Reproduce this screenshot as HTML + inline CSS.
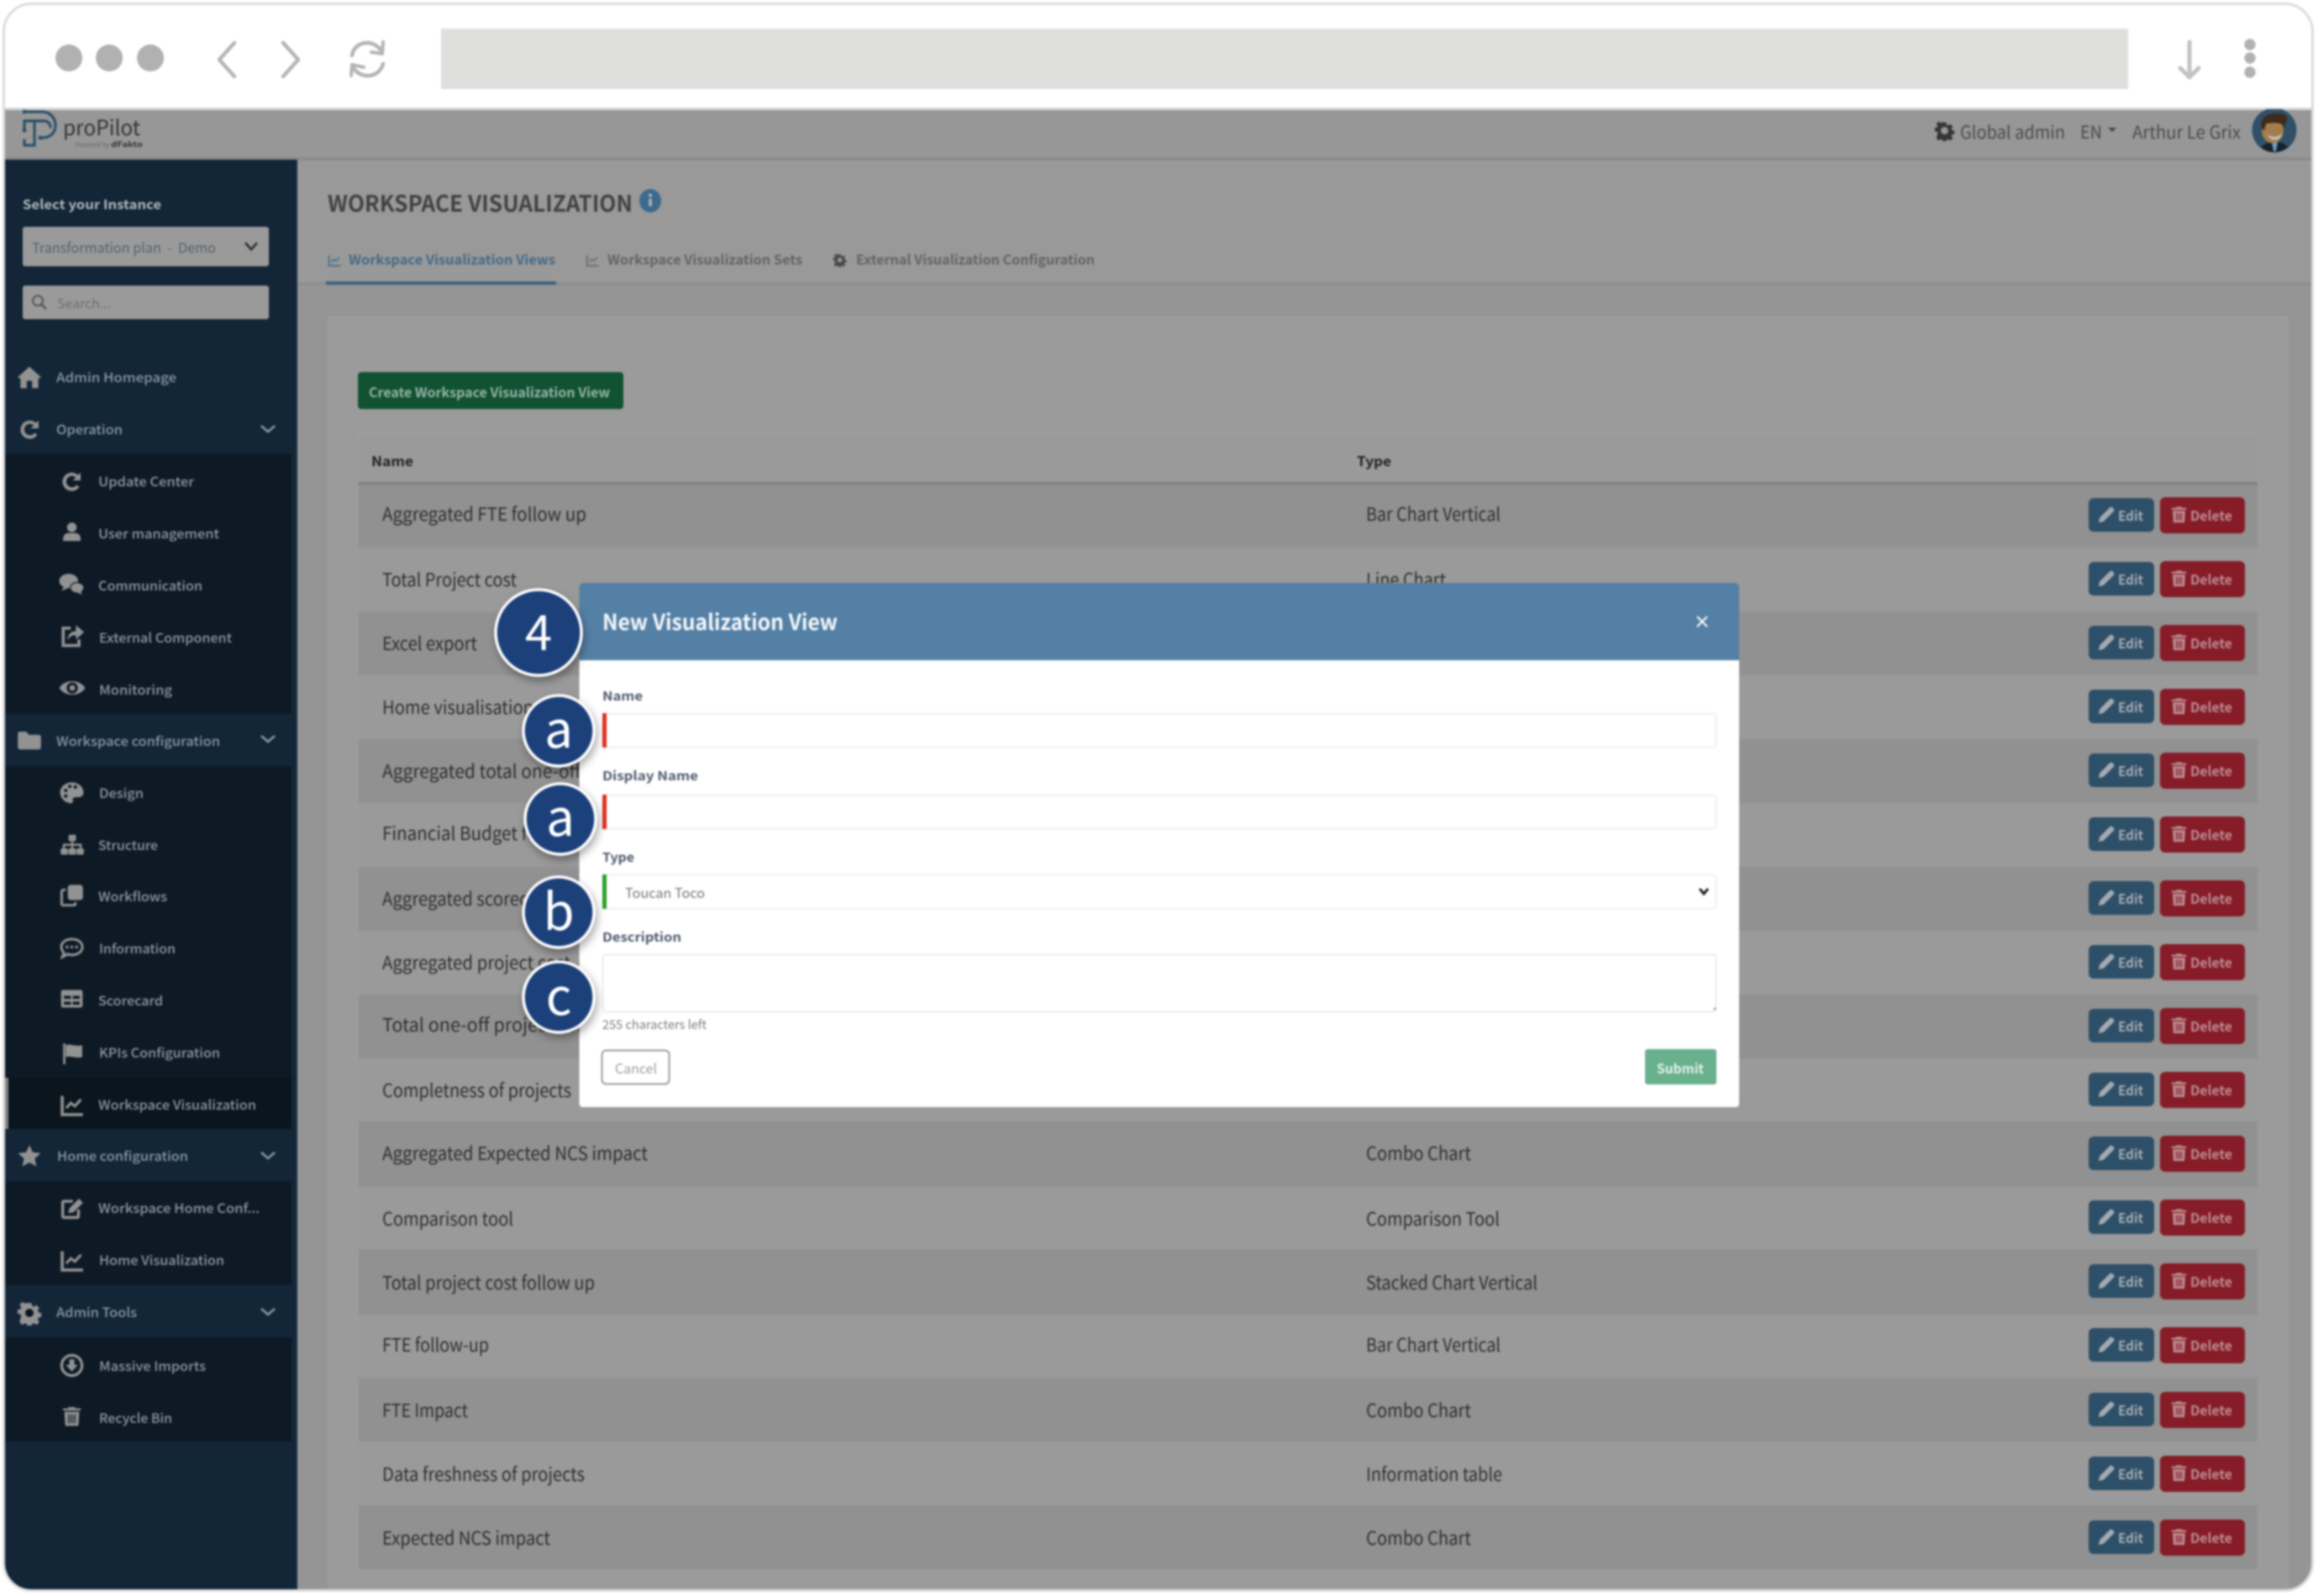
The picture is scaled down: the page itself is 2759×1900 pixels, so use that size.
<!DOCTYPE html>
<html lang="en"><head><meta charset="utf-8"><title>proPilot - Workspace Visualization</title>
<style>
html,body{margin:0;padding:0;background:#fff;width:2759px;height:1900px;overflow:hidden}
svg{display:block;filter:blur(.95px)}
text{font-family:"Noto Sans CJK JP","Liberation Sans",sans-serif;white-space:pre}
.r{font-size:22px;fill:#2e2e2e}
.s{font-size:15.5px;fill:#8d98a3;font-weight:500}
.e{font-size:16px;fill:#a4adb5;font-weight:700}
.x{font-size:16px;fill:#bd8d92;font-weight:700}
.l{font-size:15px;fill:#4e5a6b;font-weight:700}
.d{fill:#919191}.w{fill:#9a9a9a}
.ic{color:#929292;fill:#929292}
.b{font-size:60px;fill:#fff}
</style></head><body>
<svg xmlns="http://www.w3.org/2000/svg" width="2759" height="1900" viewBox="0 0 2759 1900">
<defs>
<clipPath id="fr"><rect x="5" y="5" width="2747" height="1888" rx="32"/></clipPath>
<clipPath id="av"><circle cx="2707" cy="155" r="26"/></clipPath>
<clipPath id="hd"><rect x="0" y="130" width="2759" height="1770"/></clipPath>
<filter id="sh" x="-30%" y="-30%" width="170%" height="170%"><feDropShadow dx="2" dy="5" stdDeviation="5" flood-color="#000" flood-opacity=".35"/></filter>
<symbol id="home" viewBox="0 0 24 24"><path d="M12 2 23.500 12.500 20.500 13V22.500H14.500V15.500H9.500V22.500H3.500V13L.5 12.500Z"/></symbol>
<symbol id="redo" viewBox="0 0 24 24"><path d="M22 2.500V11.500H13L16.500 8A6.500 6.500 0 1 0 17.500 16.500L20.500 19A10.500 10.500 0 1 1 19 5.300Z"/></symbol>
<symbol id="user" viewBox="0 0 24 24"><circle cx="12" cy="7" r="5.500"/><path d="M2 22.500V20c0-4 3-6.500 6-6.500h8c3 0 6 2.500 6 6.500v2.500Z"/></symbol>
<symbol id="comm" viewBox="0 0 24 24"><ellipse cx="9" cy="8.500" rx="9" ry="6.800"/><path d="M2 18l3-5 4 2Z"/><ellipse cx="17" cy="15" rx="6.500" ry="5" stroke="#0d1a26" stroke-width="1"/><path d="M22 21.500l-2-4-3 2Z"/></symbol>
<symbol id="ext" viewBox="0 0 24 24"><path d="M11 4H3.500V21H19V15" fill="none" stroke="currentColor" stroke-width="3"/><path d="M16 1l8 7-8 7v-4c-4 0-6 1-8 5 0-6 3-9 8-9Z"/></symbol>
<symbol id="eye" viewBox="0 0 24 24"><path fill-rule="evenodd" d="M.5 12C5 4 19 4 23.500 12 19 20 5 20 .5 12ZM12 7a5 5 0 1 0 0 10 5 5 0 0 0 0-10Z"/><circle cx="12" cy="12" r="2.500"/></symbol>
<symbol id="folder" viewBox="0 0 24 24"><path d="M1 6c0-1 1-2 2-2h6l2.500 3H21c1 0 2 1 2 2v10c0 1-1 2-2 2H3c-1 0-2-1-2-2Z"/></symbol>
<symbol id="pal" viewBox="0 0 24 24"><path fill-rule="evenodd" d="M12 2C5 2 .5 7 .5 12S5 22.500 11 22.500c3 0 2-3 2-4s1-2 3-2h3c3 0 4.500-2 4.500-4.500C23.500 6 18 2 12 2Z"/><g fill="#0d1a26"><circle cx="6" cy="10" r="1.700"/><circle cx="10" cy="6" r="1.700"/><circle cx="15.500" cy="6.500" r="1.700"/><circle cx="6" cy="15.500" r="1.700"/></g></symbol>
<symbol id="site" viewBox="0 0 24 24"><rect x="8.500" y="3" width="7" height="6" rx="1"/><rect x="1" y="16" width="7" height="6" rx="1.500"/><rect x="8.500" y="16" width="7" height="6" rx="1"/><rect x="16" y="16" width="7" height="6" rx="1.500"/><path d="M4 16v-3.500h16V16M12 9v7" fill="none" stroke="currentColor" stroke-width="2"/></symbol>
<symbol id="clone" viewBox="0 0 24 24"><rect x="8" y="2" width="15" height="15" rx="3"/><path d="M6 7H3.500C2.500 7 2 8 2 8.500V20.500c0 1 .5 1.500 1.500 1.500H14c1 0 1.500-.5 1.500-1.500V19" fill="none" stroke="currentColor" stroke-width="2.500"/></symbol>
<symbol id="dots" viewBox="0 0 24 24"><path d="M12 4c6 0 10 3.300 10 7.500S18 19 12 19c-1.500 0-3-.2-4-.7L3 21l1.500-4C3 15.500 2 13.500 2 11.500 2 7.300 6 4 12 4Z" fill="none" stroke="currentColor" stroke-width="2.400"/><circle cx="7.500" cy="11.500" r="1.400"/><circle cx="12" cy="11.500" r="1.400"/><circle cx="16.500" cy="11.500" r="1.400"/></symbol>
<symbol id="tbl" viewBox="0 0 24 24"><path fill-rule="evenodd" d="M3 3h18c1 0 2 1 2 2v14c0 1-1 2-2 2H3c-1 0-2-1-2-2V5c0-1 1-2 2-2ZM4 9v3h7V9Zm9 0v3h7V9ZM4 15v3h7v-3Zm9 0v3h7v-3Z"/></symbol>
<symbol id="flag" viewBox="0 0 24 24"><rect x="2" y="1" width="2.500" height="23"/><path d="M5 3c6-2 10 2 18 0v13c-8 2-12-2-18 0Z"/></symbol>
<symbol id="chart" viewBox="0 0 24 24"><path d="M2.500 3V21.500H23" fill="none" stroke="currentColor" stroke-width="3"/><path d="M6.500 15 11 10l4 3 6-6.500" fill="none" stroke="currentColor" stroke-width="2.600"/></symbol>
<symbol id="star" viewBox="0 0 24 24"><path d="M12 1 15.400 8.400 23.500 9.300 17.500 14.800 19.200 22.800 12 18.700 4.800 22.800 6.500 14.800.5 9.300 8.600 8.400Z"/></symbol>
<symbol id="edit" viewBox="0 0 24 24"><path d="M13 5H4.500C3.500 5 3 5.500 3 6.500V19.500c0 1 .5 1.500 1.500 1.500H17c1 0 1.500-.5 1.500-1.500V13" fill="none" stroke="currentColor" stroke-width="2.800"/><path d="M8.500 16.500 9.500 12 19 2.500 23 6.500 13.500 16Z"/></symbol>
<symbol id="cog" viewBox="0 0 24 24"><path fill-rule="evenodd" d="M9.800 1h4.400l.7 3.300 2 .9 2.900-1.800 3 3.200-1.800 2.800.8 2 3.200.7v4.400l-3.200.6-.8 2 1.800 2.900-3 3-2.900-1.800-2 .8-.7 3.200H9.800l-.7-3.200-2-.8-2.900 1.800-3-3L3 15.400l-.8-2L-1 12.800V8.400l3.200-.7.800-2L1.200 2.900l3-3 2.900 1.800 2-.8Z" transform="translate(1.600 1.600) scale(.87)"/><circle cx="12" cy="12" r="4" fill="#0b1620"/></symbol>
<symbol id="dl" viewBox="0 0 24 24"><circle cx="12" cy="12" r="10" fill="none" stroke="currentColor" stroke-width="2.800"/><path d="M9.500 6h5v5.500H18l-6 6.500-6-6.500h3.500Z"/></symbol>
<symbol id="trash" viewBox="0 0 24 24"><path d="M8 3V1.500h8V3h6v2.500H2V3Z"/><path fill-rule="evenodd" d="M3.500 7h17L19.500 23h-15ZM8 10v10h1.500V10Zm3.250 0v10h1.500V10ZM14.500 10v10H16V10Z"/></symbol>
<symbol id="pen" viewBox="0 0 24 24"><path d="M2 22 3.500 15.500 16.500 2.500c1-1 2.500-1 3.500 0l1.500 1.500c1 1 1 2.500 0 3.500L8.500 20.500Z"/></symbol>
</defs>
<rect width="2759" height="1900" fill="#fff"/>
<g clip-path="url(#fr)">
<rect x="0" y="0" width="2759" height="128" fill="#fff"/>
<rect x="0" y="128" width="2759" height="3" fill="#d9d9d9"/>
<!-- toolbar -->
<circle cx="82" cy="69" r="16" fill="#b1b1b1"/><circle cx="130" cy="69" r="16" fill="#b1b1b1"/><circle cx="179" cy="69" r="16" fill="#b1b1b1"/>
<path d="M279 51 261 71 279 91" fill="none" stroke="#b5b5b5" stroke-width="4.500" stroke-linecap="round" stroke-linejoin="round"/>
<path d="M337 51 355 71 337 91" fill="none" stroke="#b5b5b5" stroke-width="4.500" stroke-linecap="round" stroke-linejoin="round"/>
<path d="M419 66C421 50 444 44 455 62M456 76C452 92 430 96 420 80" fill="none" stroke="#b5b5b5" stroke-width="4.500" stroke-linecap="round"/>
<path d="M456 50 455 64 442 62M418 90 419 77 433 80" fill="none" stroke="#b5b5b5" stroke-width="4" stroke-linecap="round" stroke-linejoin="round"/>
<rect x="525" y="34" width="2008" height="72" fill="#dfdfdd"/>
<path d="M2606 50V91M2595 81 2606 92 2617 81" fill="none" stroke="#c2c2c2" stroke-width="5" stroke-linecap="round" stroke-linejoin="round"/>
<circle cx="2678" cy="53" r="6.700" fill="#b1b1b1"/><circle cx="2678" cy="69" r="6.700" fill="#b1b1b1"/><circle cx="2678" cy="86" r="6.700" fill="#b1b1b1"/>
<!-- app header -->
<rect x="0" y="131" width="2759" height="58" fill="#979797"/>
<rect x="0" y="187" width="2759" height="4" fill="#8b8b8b"/>
<g fill="none" stroke="#2a5068" stroke-width="3.200" stroke-linecap="round">
<path d="M29 133H50C60 133 66 141 66 149 66 158 60 164 50 164"/>
<path d="M29 144H52C58 144 60 148 60 151"/><path d="M41 144V173H29V167"/><path d="M29 144V155"/></g>
<circle cx="29" cy="133" r="2.500" fill="#2a5068"/><circle cx="29" cy="155" r="2.500" fill="#2a5068"/><circle cx="48" cy="164" r="2.500" fill="#2a5068"/>
<text x="75" y="161" font-size="25" fill="#333" textLength="92" lengthAdjust="spacingAndGlyphs">proPilot</text>
<text x="90" y="175" font-size="7.500" fill="#666" textLength="40" lengthAdjust="spacingAndGlyphs">Powered by</text>
<text x="132" y="175" font-size="9" font-weight="700" fill="#333" textLength="38" lengthAdjust="spacingAndGlyphs">dFakto</text>
<use href="#cog" x="2302" y="143" width="25" height="25" style="color:#363636;fill:#363636"/>
<circle cx="2314.500" cy="155.500" r="4.500" fill="#979797"/>
<text x="2333" y="165" font-size="21" fill="#4a4a4a" textLength="125" lengthAdjust="spacingAndGlyphs">Global admin</text>
<text x="2476" y="165" font-size="21" fill="#4a4a4a" textLength="26" lengthAdjust="spacingAndGlyphs">EN</text>
<path d="M2509 152H2519L2514 157Z" fill="#444"/>
<text x="2538" y="165" font-size="21" fill="#4a4a4a" textLength="129" lengthAdjust="spacingAndGlyphs">Arthur Le Grix</text>
<g clip-path="url(#hd)"><circle cx="2707" cy="155" r="26.500" fill="#2f5068"/></g>
<g clip-path="url(#av)">
<path d="M2688 182C2692 171 2700 169 2707 169 2715 169 2723 171 2727 182Z" fill="#18212e"/>
<path d="M2704 169H2711L2709 180H2706Z" fill="#6f9dc0"/>
<ellipse cx="2705" cy="156" rx="13" ry="14.500" fill="#a57c4c"/>
<path d="M2692 152C2689 141 2698 135 2709 135 2718 134 2724 138 2722 142L2719 152C2716 145 2708 146 2698 147 2696 149 2696 152 2695 156Z" fill="#3f2a1d"/>
<path d="M2699 160C2704 164 2711 164 2716 159 2714 169 2702 169 2699 160Z" fill="#c4c4bf"/>
</g>
<!-- main bg -->
<rect x="354" y="191" width="2405" height="146" fill="#999"/>
<rect x="354" y="339" width="2405" height="1560" fill="#949594"/>
<rect x="391" y="377" width="2332" height="1530" fill="#9b9b9b" stroke="#a1a1a1" stroke-width="1"/>
<text x="390" y="252" font-size="27" font-weight="700" fill="#424242" textLength="363" lengthAdjust="spacingAndGlyphs">WORKSPACE VISUALIZATION</text>
<ellipse cx="774" cy="239" rx="13" ry="14" fill="#3d6a8c"/>
<circle cx="774" cy="232.500" r="2" fill="#a9b8c4"/><rect x="772.300" y="236.500" width="3.500" height="9" fill="#a9b8c4"/>
<!-- tabs -->
<rect x="354" y="336" width="2405" height="3" fill="#8a8e91"/>
<rect x="388" y="335" width="274" height="4" fill="#3c6482"/>
<use href="#chart" x="390" y="302" width="16" height="16" style="color:#4a7390;fill:#4a7390"/>
<text x="415" y="315" font-size="16" font-weight="700" fill="#436a86" textLength="246" lengthAdjust="spacingAndGlyphs">Workspace Visualization Views</text>
<use href="#chart" x="697" y="302" width="16" height="16" style="color:#6d6d6d;fill:#6d6d6d"/>
<text x="723" y="315" font-size="16" font-weight="700" fill="#646464" textLength="232" lengthAdjust="spacingAndGlyphs">Workspace Visualization Sets</text>
<use href="#cog" x="991" y="301" width="17" height="17" style="color:#4a4a4a;fill:#4a4a4a"/>
<circle cx="999.500" cy="309.500" r="2.800" fill="#999"/>
<text x="1019" y="315" font-size="16" font-weight="700" fill="#646464" textLength="284" lengthAdjust="spacingAndGlyphs">External Visualization Configuration</text>
<!-- create button -->
<rect x="426" y="443" width="316" height="44" rx="4" fill="#115233"/>
<text x="439" y="473" font-size="16" font-weight="700" fill="#9ab4a6" textLength="287" lengthAdjust="spacingAndGlyphs">Create Workspace Visualization View</text>
<!-- table -->
<rect x="426" y="518" width="2261" height="58" fill="#9a9a9a" stroke="#a2a2a2"/>
<rect x="426" y="574" width="2261" height="3" fill="#7f7f7f"/>
<text x="442" y="555" font-size="16" font-weight="700" fill="#222" textLength="50" lengthAdjust="spacingAndGlyphs">Name</text>
<text x="1615" y="555" font-size="16" font-weight="700" fill="#222" textLength="41" lengthAdjust="spacingAndGlyphs">Type</text>

<rect class="d" x="427" y="577" width="2260" height="75"/><rect class="w" x="427" y="652" width="2260" height="76"/>
<rect class="d" x="427" y="728" width="2260" height="76"/><rect class="w" x="427" y="804" width="2260" height="76"/>
<rect class="d" x="427" y="880" width="2260" height="76"/><rect class="w" x="427" y="956" width="2260" height="76"/>
<rect class="d" x="427" y="1032" width="2260" height="76"/><rect class="w" x="427" y="1108" width="2260" height="76"/>
<rect class="d" x="427" y="1184" width="2260" height="76"/><rect class="w" x="427" y="1260" width="2260" height="75"/>
<rect class="d" x="427" y="1335" width="2260" height="78"/><rect class="w" x="427" y="1413" width="2260" height="74"/>
<rect class="d" x="427" y="1487" width="2260" height="78"/><rect class="w" x="427" y="1565" width="2260" height="75"/>
<rect class="d" x="427" y="1640" width="2260" height="76"/><rect class="w" x="427" y="1716" width="2260" height="76"/>
<rect class="d" x="427" y="1792" width="2260" height="76"/>

<text class="r" x="455" y="620" textLength="243" lengthAdjust="spacingAndGlyphs">Aggregated FTE follow up</text>
<text class="r" x="455" y="698" textLength="160" lengthAdjust="spacingAndGlyphs">Total Project cost</text>
<text class="r" x="455" y="774" textLength="113" lengthAdjust="spacingAndGlyphs">Excel export</text>
<text class="r" x="455" y="850" textLength="180" lengthAdjust="spacingAndGlyphs">Home visualisation</text>
<text class="r" x="455" y="926" textLength="355" lengthAdjust="spacingAndGlyphs">Aggregated total one-off project cost</text>
<text class="r" x="455" y="1000" textLength="255" lengthAdjust="spacingAndGlyphs">Financial Budget follow up</text>
<text class="r" x="455" y="1078" textLength="205" lengthAdjust="spacingAndGlyphs">Aggregated scorecard</text>
<text class="r" x="455" y="1154" textLength="224" lengthAdjust="spacingAndGlyphs">Aggregated project cost</text>
<text class="r" x="455" y="1228" textLength="250" lengthAdjust="spacingAndGlyphs">Total one-off project cost</text>
<text class="r" x="455" y="1306" textLength="225" lengthAdjust="spacingAndGlyphs">Completness of projects</text>
<text class="r" x="455" y="1381" textLength="316" lengthAdjust="spacingAndGlyphs">Aggregated Expected NCS impact</text>
<text class="r" x="455" y="1459" textLength="156" lengthAdjust="spacingAndGlyphs">Comparison tool</text>
<text class="r" x="455" y="1535" textLength="253" lengthAdjust="spacingAndGlyphs">Total project cost follow up</text>
<text class="r" x="455" y="1609" textLength="127" lengthAdjust="spacingAndGlyphs">FTE follow-up</text>
<text class="r" x="455" y="1687" textLength="102" lengthAdjust="spacingAndGlyphs">FTE Impact</text>
<text class="r" x="455" y="1763" textLength="241" lengthAdjust="spacingAndGlyphs">Data freshness of projects</text>
<text class="r" x="455" y="1839" textLength="200" lengthAdjust="spacingAndGlyphs">Expected NCS impact</text>

<text class="r" x="1626" y="620" textLength="160" lengthAdjust="spacingAndGlyphs">Bar Chart Vertical</text>
<text class="r" x="1626" y="698" textLength="95" lengthAdjust="spacingAndGlyphs">Line Chart</text>
<text class="r" x="1626" y="1381" textLength="125" lengthAdjust="spacingAndGlyphs">Combo Chart</text>
<text class="r" x="1626" y="1459" textLength="159" lengthAdjust="spacingAndGlyphs">Comparison Tool</text>
<text class="r" x="1626" y="1535" textLength="204" lengthAdjust="spacingAndGlyphs">Stacked Chart Vertical</text>
<text class="r" x="1626" y="1609" textLength="160" lengthAdjust="spacingAndGlyphs">Bar Chart Vertical</text>
<text class="r" x="1626" y="1687" textLength="125" lengthAdjust="spacingAndGlyphs">Combo Chart</text>
<text class="r" x="1626" y="1763" textLength="162" lengthAdjust="spacingAndGlyphs">Information table</text>
<text class="r" x="1626" y="1839" textLength="125" lengthAdjust="spacingAndGlyphs">Combo Chart</text>

<g id="btnsrow">
<g transform="translate(0,613)"><rect x="2486" y="-20" width="78" height="40" rx="6" fill="#2e4f68"/><rect x="2571" y="-21" width="101" height="43" rx="6" fill="#861c27"/><use href="#pen" x="2496" y="-11" width="22" height="22" style="fill:#a2abb2"/><use href="#trash" x="2583" y="-11" width="21" height="21" style="fill:#bd8d92"/><text class="e" x="2521" y="7" textLength="30" lengthAdjust="spacingAndGlyphs">Edit</text><text class="x" x="2607" y="7" textLength="50" lengthAdjust="spacingAndGlyphs">Delete</text></g>
<g transform="translate(0,689)"><rect x="2486" y="-20" width="78" height="40" rx="6" fill="#2e4f68"/><rect x="2571" y="-21" width="101" height="43" rx="6" fill="#861c27"/><use href="#pen" x="2496" y="-11" width="22" height="22" style="fill:#a2abb2"/><use href="#trash" x="2583" y="-11" width="21" height="21" style="fill:#bd8d92"/><text class="e" x="2521" y="7" textLength="30" lengthAdjust="spacingAndGlyphs">Edit</text><text class="x" x="2607" y="7" textLength="50" lengthAdjust="spacingAndGlyphs">Delete</text></g>
<g transform="translate(0,765)"><rect x="2486" y="-20" width="78" height="40" rx="6" fill="#2e4f68"/><rect x="2571" y="-21" width="101" height="43" rx="6" fill="#861c27"/><use href="#pen" x="2496" y="-11" width="22" height="22" style="fill:#a2abb2"/><use href="#trash" x="2583" y="-11" width="21" height="21" style="fill:#bd8d92"/><text class="e" x="2521" y="7" textLength="30" lengthAdjust="spacingAndGlyphs">Edit</text><text class="x" x="2607" y="7" textLength="50" lengthAdjust="spacingAndGlyphs">Delete</text></g>
<g transform="translate(0,841)"><rect x="2486" y="-20" width="78" height="40" rx="6" fill="#2e4f68"/><rect x="2571" y="-21" width="101" height="43" rx="6" fill="#861c27"/><use href="#pen" x="2496" y="-11" width="22" height="22" style="fill:#a2abb2"/><use href="#trash" x="2583" y="-11" width="21" height="21" style="fill:#bd8d92"/><text class="e" x="2521" y="7" textLength="30" lengthAdjust="spacingAndGlyphs">Edit</text><text class="x" x="2607" y="7" textLength="50" lengthAdjust="spacingAndGlyphs">Delete</text></g>
<g transform="translate(0,917)"><rect x="2486" y="-20" width="78" height="40" rx="6" fill="#2e4f68"/><rect x="2571" y="-21" width="101" height="43" rx="6" fill="#861c27"/><use href="#pen" x="2496" y="-11" width="22" height="22" style="fill:#a2abb2"/><use href="#trash" x="2583" y="-11" width="21" height="21" style="fill:#bd8d92"/><text class="e" x="2521" y="7" textLength="30" lengthAdjust="spacingAndGlyphs">Edit</text><text class="x" x="2607" y="7" textLength="50" lengthAdjust="spacingAndGlyphs">Delete</text></g>
<g transform="translate(0,993)"><rect x="2486" y="-20" width="78" height="40" rx="6" fill="#2e4f68"/><rect x="2571" y="-21" width="101" height="43" rx="6" fill="#861c27"/><use href="#pen" x="2496" y="-11" width="22" height="22" style="fill:#a2abb2"/><use href="#trash" x="2583" y="-11" width="21" height="21" style="fill:#bd8d92"/><text class="e" x="2521" y="7" textLength="30" lengthAdjust="spacingAndGlyphs">Edit</text><text class="x" x="2607" y="7" textLength="50" lengthAdjust="spacingAndGlyphs">Delete</text></g>
<g transform="translate(0,1069)"><rect x="2486" y="-20" width="78" height="40" rx="6" fill="#2e4f68"/><rect x="2571" y="-21" width="101" height="43" rx="6" fill="#861c27"/><use href="#pen" x="2496" y="-11" width="22" height="22" style="fill:#a2abb2"/><use href="#trash" x="2583" y="-11" width="21" height="21" style="fill:#bd8d92"/><text class="e" x="2521" y="7" textLength="30" lengthAdjust="spacingAndGlyphs">Edit</text><text class="x" x="2607" y="7" textLength="50" lengthAdjust="spacingAndGlyphs">Delete</text></g>
<g transform="translate(0,1145)"><rect x="2486" y="-20" width="78" height="40" rx="6" fill="#2e4f68"/><rect x="2571" y="-21" width="101" height="43" rx="6" fill="#861c27"/><use href="#pen" x="2496" y="-11" width="22" height="22" style="fill:#a2abb2"/><use href="#trash" x="2583" y="-11" width="21" height="21" style="fill:#bd8d92"/><text class="e" x="2521" y="7" textLength="30" lengthAdjust="spacingAndGlyphs">Edit</text><text class="x" x="2607" y="7" textLength="50" lengthAdjust="spacingAndGlyphs">Delete</text></g>
<g transform="translate(0,1221)"><rect x="2486" y="-20" width="78" height="40" rx="6" fill="#2e4f68"/><rect x="2571" y="-21" width="101" height="43" rx="6" fill="#861c27"/><use href="#pen" x="2496" y="-11" width="22" height="22" style="fill:#a2abb2"/><use href="#trash" x="2583" y="-11" width="21" height="21" style="fill:#bd8d92"/><text class="e" x="2521" y="7" textLength="30" lengthAdjust="spacingAndGlyphs">Edit</text><text class="x" x="2607" y="7" textLength="50" lengthAdjust="spacingAndGlyphs">Delete</text></g>
<g transform="translate(0,1297)"><rect x="2486" y="-20" width="78" height="40" rx="6" fill="#2e4f68"/><rect x="2571" y="-21" width="101" height="43" rx="6" fill="#861c27"/><use href="#pen" x="2496" y="-11" width="22" height="22" style="fill:#a2abb2"/><use href="#trash" x="2583" y="-11" width="21" height="21" style="fill:#bd8d92"/><text class="e" x="2521" y="7" textLength="30" lengthAdjust="spacingAndGlyphs">Edit</text><text class="x" x="2607" y="7" textLength="50" lengthAdjust="spacingAndGlyphs">Delete</text></g>
<g transform="translate(0,1373)"><rect x="2486" y="-20" width="78" height="40" rx="6" fill="#2e4f68"/><rect x="2571" y="-21" width="101" height="43" rx="6" fill="#861c27"/><use href="#pen" x="2496" y="-11" width="22" height="22" style="fill:#a2abb2"/><use href="#trash" x="2583" y="-11" width="21" height="21" style="fill:#bd8d92"/><text class="e" x="2521" y="7" textLength="30" lengthAdjust="spacingAndGlyphs">Edit</text><text class="x" x="2607" y="7" textLength="50" lengthAdjust="spacingAndGlyphs">Delete</text></g>
<g transform="translate(0,1449)"><rect x="2486" y="-20" width="78" height="40" rx="6" fill="#2e4f68"/><rect x="2571" y="-21" width="101" height="43" rx="6" fill="#861c27"/><use href="#pen" x="2496" y="-11" width="22" height="22" style="fill:#a2abb2"/><use href="#trash" x="2583" y="-11" width="21" height="21" style="fill:#bd8d92"/><text class="e" x="2521" y="7" textLength="30" lengthAdjust="spacingAndGlyphs">Edit</text><text class="x" x="2607" y="7" textLength="50" lengthAdjust="spacingAndGlyphs">Delete</text></g>
<g transform="translate(0,1525)"><rect x="2486" y="-20" width="78" height="40" rx="6" fill="#2e4f68"/><rect x="2571" y="-21" width="101" height="43" rx="6" fill="#861c27"/><use href="#pen" x="2496" y="-11" width="22" height="22" style="fill:#a2abb2"/><use href="#trash" x="2583" y="-11" width="21" height="21" style="fill:#bd8d92"/><text class="e" x="2521" y="7" textLength="30" lengthAdjust="spacingAndGlyphs">Edit</text><text class="x" x="2607" y="7" textLength="50" lengthAdjust="spacingAndGlyphs">Delete</text></g>
<g transform="translate(0,1601)"><rect x="2486" y="-20" width="78" height="40" rx="6" fill="#2e4f68"/><rect x="2571" y="-21" width="101" height="43" rx="6" fill="#861c27"/><use href="#pen" x="2496" y="-11" width="22" height="22" style="fill:#a2abb2"/><use href="#trash" x="2583" y="-11" width="21" height="21" style="fill:#bd8d92"/><text class="e" x="2521" y="7" textLength="30" lengthAdjust="spacingAndGlyphs">Edit</text><text class="x" x="2607" y="7" textLength="50" lengthAdjust="spacingAndGlyphs">Delete</text></g>
<g transform="translate(0,1678)"><rect x="2486" y="-20" width="78" height="40" rx="6" fill="#2e4f68"/><rect x="2571" y="-21" width="101" height="43" rx="6" fill="#861c27"/><use href="#pen" x="2496" y="-11" width="22" height="22" style="fill:#a2abb2"/><use href="#trash" x="2583" y="-11" width="21" height="21" style="fill:#bd8d92"/><text class="e" x="2521" y="7" textLength="30" lengthAdjust="spacingAndGlyphs">Edit</text><text class="x" x="2607" y="7" textLength="50" lengthAdjust="spacingAndGlyphs">Delete</text></g>
<g transform="translate(0,1754)"><rect x="2486" y="-20" width="78" height="40" rx="6" fill="#2e4f68"/><rect x="2571" y="-21" width="101" height="43" rx="6" fill="#861c27"/><use href="#pen" x="2496" y="-11" width="22" height="22" style="fill:#a2abb2"/><use href="#trash" x="2583" y="-11" width="21" height="21" style="fill:#bd8d92"/><text class="e" x="2521" y="7" textLength="30" lengthAdjust="spacingAndGlyphs">Edit</text><text class="x" x="2607" y="7" textLength="50" lengthAdjust="spacingAndGlyphs">Delete</text></g>
<g transform="translate(0,1830)"><rect x="2486" y="-20" width="78" height="40" rx="6" fill="#2e4f68"/><rect x="2571" y="-21" width="101" height="43" rx="6" fill="#861c27"/><use href="#pen" x="2496" y="-11" width="22" height="22" style="fill:#a2abb2"/><use href="#trash" x="2583" y="-11" width="21" height="21" style="fill:#bd8d92"/><text class="e" x="2521" y="7" textLength="30" lengthAdjust="spacingAndGlyphs">Edit</text><text class="x" x="2607" y="7" textLength="50" lengthAdjust="spacingAndGlyphs">Delete</text></g>
</g>

<!-- sidebar -->
<rect x="0" y="190" width="354" height="1710" fill="#122638"/>
<rect x="352" y="190" width="2" height="1710" fill="#1b3044"/>
<rect x="0" y="540" width="347" height="310" fill="#0d1a26"/>
<rect x="0" y="912" width="347" height="432" fill="#0d1a26"/>
<rect x="0" y="1283" width="347" height="61" fill="#0a151e"/>
<rect x="5" y="1283" width="5" height="61" fill="#868686"/>
<rect x="0" y="1406" width="347" height="124" fill="#0d1a26"/>
<rect x="0" y="1592" width="347" height="124" fill="#0d1a26"/>

<text x="27" y="249" font-size="15.500" font-weight="700" fill="#b4b8bb" textLength="165" lengthAdjust="spacingAndGlyphs">Select your Instance</text>
<rect x="27" y="270" width="293" height="47" rx="3" fill="#9a9a9a"/>
<text x="38" y="301" font-size="16.500" fill="#56606a" textLength="219" lengthAdjust="spacingAndGlyphs">Transformation plan  -  Demo</text>
<path d="M292 289 299 297 306 289" fill="none" stroke="#2a2a2a" stroke-width="2.500"/>
<rect x="27" y="340" width="293" height="40" rx="3" fill="#9a9a9a"/>
<circle cx="45" cy="358" r="6" fill="none" stroke="#555" stroke-width="2"/><path d="M49.500 362.500 55 368" stroke="#555" stroke-width="2.500"/>
<text x="68" y="367" font-size="15.500" fill="#6a6f74" textLength="64" lengthAdjust="spacingAndGlyphs">Search...</text>

<use class="ic" href="#home" x="20" y="434" width="30" height="30"/>
<text class="s" x="67" y="455" textLength="143" lengthAdjust="spacingAndGlyphs">Admin Homepage</text>

<use class="ic" href="#redo" x="23" y="498" width="25" height="25"/>
<text class="s" x="67" y="517" textLength="79" lengthAdjust="spacingAndGlyphs">Operation</text>
<use class="ic" href="#redo" x="73" y="560" width="25" height="25"/>
<text class="s" x="117" y="579" textLength="114" lengthAdjust="spacingAndGlyphs">Update Center</text>
<use class="ic" href="#user" x="73" y="620" width="25" height="26"/>
<text class="s" x="117" y="641" textLength="144" lengthAdjust="spacingAndGlyphs">User management</text>
<use class="ic" href="#comm" x="68" y="681" width="35" height="30"/>
<text class="s" x="117" y="703" textLength="124" lengthAdjust="spacingAndGlyphs">Communication</text>
<use class="ic" href="#ext" x="70" y="743" width="31" height="29"/>
<text class="s" x="118" y="765" textLength="158" lengthAdjust="spacingAndGlyphs">External Component</text>
<use class="ic" href="#eye" x="70" y="803" width="32" height="32"/>
<text class="s" x="118" y="827" textLength="87" lengthAdjust="spacingAndGlyphs">Monitoring</text>

<use class="ic" href="#folder" x="20" y="866" width="30" height="30"/>
<text class="s" x="67" y="888" textLength="195" lengthAdjust="spacingAndGlyphs">Workspace configuration</text>
<use class="ic" href="#pal" x="71" y="929" width="29" height="29"/>
<text class="s" x="118" y="950" textLength="53" lengthAdjust="spacingAndGlyphs">Design</text>
<use class="ic" href="#site" x="69" y="990" width="34" height="30"/>
<text class="s" x="117" y="1012" textLength="71" lengthAdjust="spacingAndGlyphs">Structure</text>
<use class="ic" href="#clone" x="71" y="1051" width="29" height="29"/>
<text class="s" x="117" y="1073" textLength="82" lengthAdjust="spacingAndGlyphs">Workflows</text>
<use class="ic" href="#dots" x="70" y="1113" width="31" height="30"/>
<text class="s" x="118" y="1135" textLength="91" lengthAdjust="spacingAndGlyphs">Information</text>
<use class="ic" href="#tbl" x="71" y="1175" width="29" height="28"/>
<text class="s" x="117" y="1197" textLength="77" lengthAdjust="spacingAndGlyphs">Scorecard</text>
<use class="ic" href="#flag" x="73" y="1240" width="26" height="28"/>
<text class="s" x="118" y="1259" textLength="144" lengthAdjust="spacingAndGlyphs">KPIs Configuration</text>
<use class="ic" href="#chart" x="71" y="1301" width="29" height="29"/>
<text class="s" x="117" y="1321" textLength="188" lengthAdjust="spacingAndGlyphs">Workspace Visualization</text>

<use class="ic" href="#star" x="20" y="1362" width="30" height="28"/>
<text class="s" x="68" y="1382" textLength="156" lengthAdjust="spacingAndGlyphs">Home configuration</text>
<use class="ic" href="#edit" x="71" y="1424" width="29" height="29"/>
<text class="s" x="117" y="1444" textLength="192" lengthAdjust="spacingAndGlyphs">Workspace Home Conf...</text>
<use class="ic" href="#chart" x="71" y="1486" width="29" height="29"/>
<text class="s" x="118" y="1506" textLength="149" lengthAdjust="spacingAndGlyphs">Home Visualization</text>

<use class="ic" href="#cog" x="20" y="1548" width="30" height="30"/>
<text class="s" x="67" y="1568" textLength="96" lengthAdjust="spacingAndGlyphs">Admin Tools</text>
<use class="ic" href="#dl" x="71" y="1611" width="29" height="29"/>
<text class="s" x="118" y="1632" textLength="127" lengthAdjust="spacingAndGlyphs">Massive Imports</text>
<use class="ic" href="#trash" x="73" y="1671" width="25" height="30"/>
<text class="s" x="118" y="1694" textLength="87" lengthAdjust="spacingAndGlyphs">Recycle Bin</text>

<path d="M311 507 319 514 327 507M311 876 319 883 327 876M311 1372 319 1379 327 1372M311 1558 319 1565 327 1558" fill="none" stroke="#8e99a3" stroke-width="2.500"/>

<!-- modal -->
<rect x="689.500" y="694" width="1380.500" height="624" rx="4" fill="#fff"/>
<path d="M689.500 786V698a4 4 0 0 1 4-4H2066a4 4 0 0 1 4 4V786Z" fill="#5480a5"/>
<text x="717" y="750" font-size="26" font-weight="700" fill="#f4f7fa" textLength="280" lengthAdjust="spacingAndGlyphs">New Visualization View</text>
<path d="M2020 734 2032 746M2032 734 2020 746" stroke="#fff" stroke-width="2"/>

<text class="l" x="717" y="834" textLength="48" lengthAdjust="spacingAndGlyphs">Name</text>
<rect x="717.500" y="849.500" width="1325" height="40" rx="3" fill="#fff" stroke="#ececec" stroke-width="1.500"/>
<rect x="717" y="849" width="5" height="41" fill="#e0301f"/>
<text class="l" x="717" y="929" textLength="114" lengthAdjust="spacingAndGlyphs">Display Name</text>
<rect x="717.500" y="946.500" width="1325" height="40" rx="3" fill="#fff" stroke="#ececec" stroke-width="1.500"/>
<rect x="717" y="946" width="5" height="41" fill="#e0301f"/>
<text class="l" x="717" y="1026" textLength="38" lengthAdjust="spacingAndGlyphs">Type</text>
<rect x="717.500" y="1041.500" width="1325" height="40" rx="3" fill="#fff" stroke="#ececec" stroke-width="1.500"/>
<rect x="717" y="1041" width="5" height="41" fill="#2ca02c"/>
<text x="744" y="1069" font-size="16" fill="#7a7078" textLength="95" lengthAdjust="spacingAndGlyphs">Toucan Toco</text>
<path d="M2023 1058 2028 1064 2033 1058" fill="none" stroke="#222" stroke-width="3"/>
<text class="l" x="717" y="1121" textLength="94" lengthAdjust="spacingAndGlyphs">Description</text>
<rect x="717.500" y="1136.500" width="1325" height="68" rx="3" fill="#fff" stroke="#e7e6ee" stroke-width="1.500"/>
<path d="M2040 1202 2042 1200" stroke="#666" stroke-width="1.500"/>
<text x="717" y="1225" font-size="14.500" fill="#7d7d85" textLength="124" lengthAdjust="spacingAndGlyphs">255 characters left</text>
<rect x="716.500" y="1250.500" width="80" height="40" rx="5" fill="#fff" stroke="#9a9a9a" stroke-width="2"/>
<text x="732" y="1278" font-size="16" fill="#9c9c9c" textLength="50" lengthAdjust="spacingAndGlyphs">Cancel</text>
<rect x="1958" y="1249" width="85" height="42" rx="3" fill="#69b08c"/>
<text x="1972" y="1278" font-size="16" font-weight="700" fill="#e4f1ea" textLength="56" lengthAdjust="spacingAndGlyphs">Submit</text>

<!-- badges -->
<g stroke="#fff" stroke-width="3.500" fill="#1f3f7a" filter="url(#sh)">
<circle cx="641" cy="753" r="51"/>
<circle cx="665" cy="870" r="42"/>
<circle cx="667" cy="975" r="42"/>
<circle cx="665" cy="1086" r="42"/>
<circle cx="665" cy="1187" r="42"/>
</g>
<text x="641" y="774" font-size="58" fill="#fff" text-anchor="middle">4</text>
<text x="665" y="890" class="b" text-anchor="middle">a</text>
<text x="667" y="995" class="b" text-anchor="middle">a</text>
<text x="665" y="1107" class="b" text-anchor="middle">b</text>
<text x="665" y="1208" class="b" text-anchor="middle">c</text>
</g>
<rect x="4.500" y="4.500" width="2748" height="1889" rx="33" fill="none" stroke="#dcdcdc" stroke-width="3"/>
</svg>
</body></html>
